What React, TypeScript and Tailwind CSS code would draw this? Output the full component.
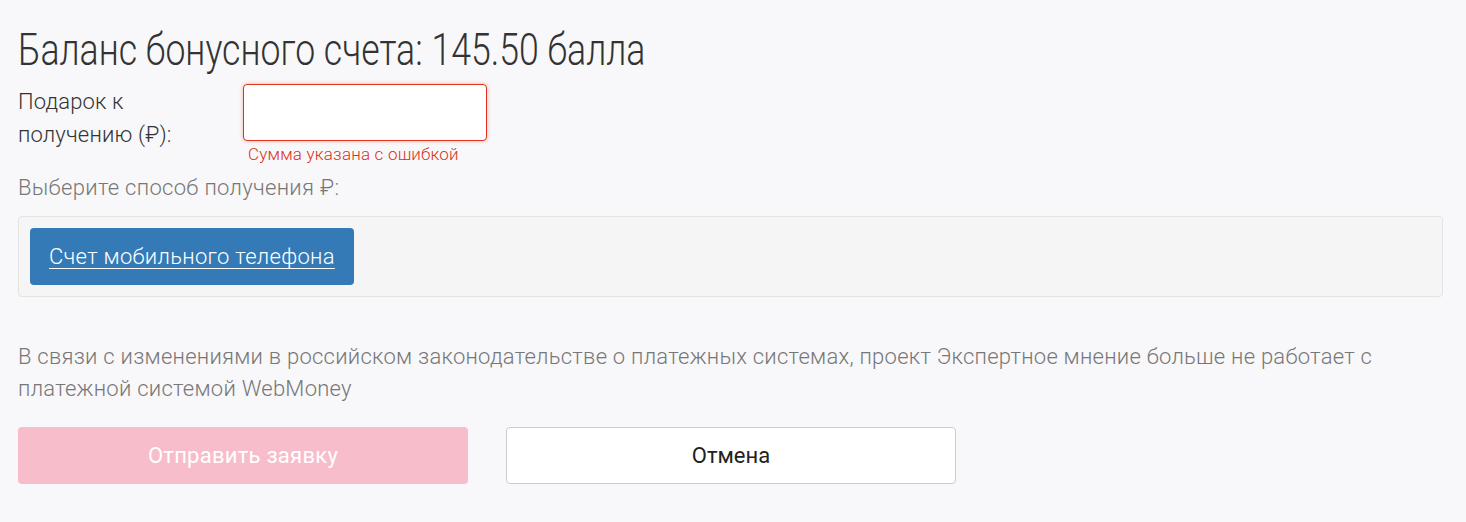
import React from 'react';

const App = () => {
  return (
    <div className="min-h-[522px] bg-[#f8f8fa] pl-[18px] pr-[23px] pt-[24px] pb-[38px] text-[#333] [font-family:Roboto,'Liberation_Sans',sans-serif]">
      <h1 className="h-[52px] origin-left scale-x-[0.81] whitespace-nowrap text-[44px] leading-[52px] font-light text-[#333]">
        Баланс бонусного счета: 145.50 балла
      </h1>

      <div className="mt-[8px] flex">
        <label className="w-[225px] shrink-0 pt-[1px] text-[22px] leading-[33px] font-light tracking-[0.15px] text-[#333]">
          Подарок к<br />получению (₽):
        </label>
        <div className="flex flex-col">
          <input
            type="text"
            className="h-[57px] w-[244px] rounded-[4px] border border-[#e0301e] bg-white px-3 shadow-[0_0_4px_rgba(224,48,30,0.35)] outline-none"
          />
          <span className="mt-[1px] pl-[5px] text-[17px] leading-[24px] font-light tracking-[0.2px] text-[#d9301b]">
            Сумма указана с ошибкой
          </span>
        </div>
      </div>

      <p className="mt-[7px] text-[22px] leading-[30px] font-light tracking-[0.3px] text-[#777]">
        Выберите способ получения ₽:
      </p>

      <div className="mt-[13px] rounded-[4px] border border-[#e3e3e3] bg-[#f5f5f5] p-[11px]">
        <button className="h-[57px] rounded-[4px] bg-[#337ab7] px-[19px] text-[22px] font-light tracking-[0.3px] text-white underline underline-offset-[4px] decoration-1">
          Счет мобильного телефона
        </button>
      </div>

      <p className="mt-[44px] text-[22px] leading-[32px] font-light tracking-[0.25px] text-[#777]">
        В связи с изменениями в российском законодательстве о платежных системах, проект Экспертное мнение больше не работает с платежной системой WebMoney
      </p>

      <div className="mt-[22px] flex gap-[38px]">
        <button className="h-[57px] w-[450px] rounded-[4px] bg-[#f7bdcb] text-[22px] font-normal tracking-[0.25px] text-white">
          Отправить заявку
        </button>
        <button className="h-[57px] w-[450px] rounded-[4px] border border-[#ccc] bg-white text-[22px] font-normal text-[#222]">
          Отмена
        </button>
      </div>
    </div>
  );
};

export default App;
